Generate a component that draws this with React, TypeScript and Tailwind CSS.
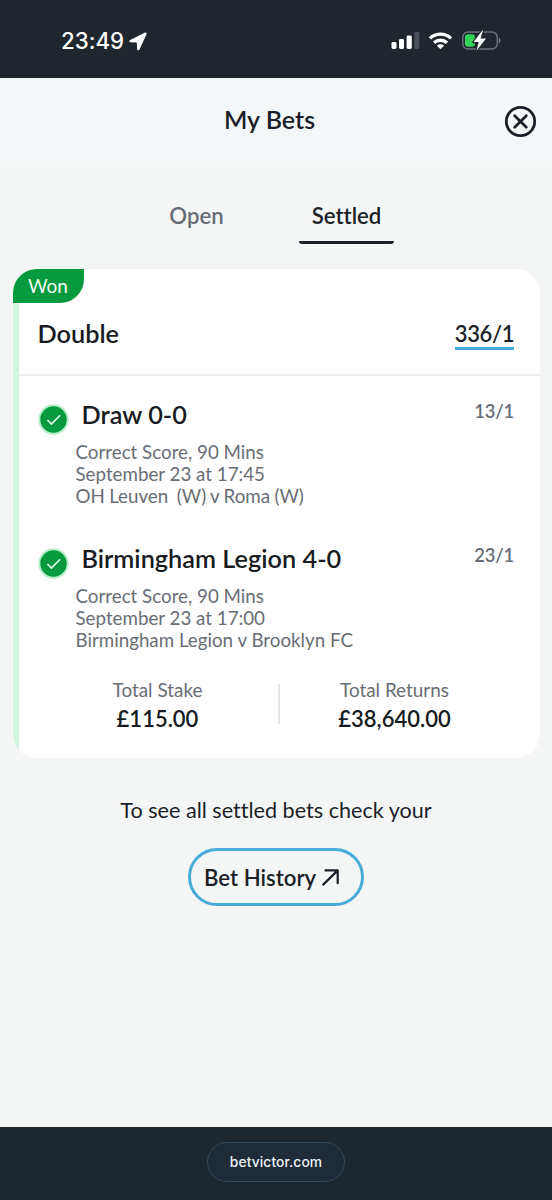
type Selection = {
  name: string;
  odds: string;
  details: string[];
};

const selections: Selection[] = [
  {
    name: "Draw 0-0",
    odds: "13/1",
    details: ["Correct Score, 90 Mins", "September 23 at 17:45", "OH Leuven\u00a0 (W) v Roma (W)"],
  },
  {
    name: "Birmingham Legion 4-0",
    odds: "23/1",
    details: ["Correct Score, 90 Mins", "September 23 at 17:00", "Birmingham Legion v Brooklyn FC"],
  },
];

function StatusBar() {
  return (
    <div className="flex h-[78px] items-start justify-between bg-[#1f262e] pt-[26px] pl-[61px] pr-[51px] font-['Inter',sans-serif] text-white">
      <div className="flex h-[30px] items-center gap-[5px]">
        <span className="text-[22.3px] leading-[30px] font-medium">23:49</span>
        <svg width="18" height="19" viewBox="0 0 18 19" fill="currentColor">
          <path d="M15.6.7 1.1 8C-.1 8.8.2 10.1 1.5 10.2l6.3.2.3 6.6c.1 1.6 1.7 1.8 2.4.4L17.4 2.6c.7-1.4-.5-2.5-1.8-1.9Z" />
        </svg>
      </div>
      <div className="flex h-[30px] items-center">
        <svg width="110" height="22" viewBox="391 30 110 22">
          <g fill="#fff">
            <rect x="391.5" y="42" width="5" height="7" rx="1.4" />
            <rect x="399" y="39" width="5" height="10" rx="1.4" />
            <rect x="406.6" y="35.5" width="5.2" height="13.5" rx="1.4" />
            <rect x="414.3" y="32" width="5" height="17" rx="1.4" fill="#4b525b" />
          </g>
          <g fill="none" stroke="#fff" strokeWidth="3.3">
            <path d="M430 38.4a15.2 15.2 0 0 1 21 0" />
            <path d="M434 42.8a9.6 9.6 0 0 1 13 0" />
          </g>
          <path d="M436.9 45.7a5.3 5.3 0 0 1 7.2 0l-3.6 3.6Z" fill="#fff" />
          <rect x="462.8" y="32" width="34.4" height="17" rx="5" fill="none" stroke="#6d747b" strokeWidth="1.4" />
          <path d="M498.7 37.7c2.6.8 2.6 5 0 5.8Z" fill="#6d747b" />
          <rect x="465" y="34.2" width="10" height="12.6" rx="3" fill="#31d15a" />
          <path d="m482.3 30.6-8.8 11.5h5.2l-2.2 8.3 9.6-12h-5.6l2.5-7.8Z" fill="#fff" stroke="#1f262e" strokeWidth="2.4" paintOrder="stroke" strokeLinejoin="round" />
        </svg>
      </div>
    </div>
  );
}

function WonCheck() {
  return (
    <svg className="mt-[5px] -ml-px shrink-0" width="31" height="31" viewBox="0 0 31 31">
      <circle cx="15.5" cy="15.5" r="15.2" fill="#b8ebca" />
      <circle cx="15.5" cy="15.5" r="13.2" fill="#059a3e" />
      <path d="m9.4 16 4.1 4 8.6-8.7" fill="none" stroke="#e9fbef" strokeWidth="1.6" />
    </svg>
  );
}

function SelectionRow({ name, odds, details }: Selection) {
  return (
    <div className="flex h-[144px] items-start pr-[26px] pl-[26px] first:[&_p:last-child]:[word-spacing:-0.5px]">
      <WonCheck />
      <div className="flex-1 pl-[7px]">
        <h3 className="pl-[6px] text-[25.3px] leading-[31px] font-semibold text-[#171b22]">{name}</h3>
        <div className="mt-[11px] text-[18.75px] leading-[22px] text-[#686d75]">
          {details.map((line) => (
            <p key={line} className="whitespace-nowrap">{line}</p>
          ))}
        </div>
      </div>
      <span className="text-[18.4px] leading-[24px] font-semibold tracking-[-0.2px] text-[#686d75]">{odds}</span>
    </div>
  );
}

function Total({ label, value }: { label: string; value: string }) {
  return (
    <div className="text-center">
      <p className="text-[18.9px] leading-[24px] text-[#686d75]">{label}</p>
      <p className="mt-[3px] text-[22px] leading-[28px] font-semibold text-[#171b22]">{value}</p>
    </div>
  );
}

export default function App() {
  return (
    <div className="flex h-[1200px] w-[552px] flex-col overflow-hidden bg-[#f4f6f6] font-['Lato',sans-serif] text-[#1b1f28] [font-variant-ligatures:none]">
      <StatusBar />
      <header className="grid h-[86px] grid-cols-[48px_1fr_48px] items-center bg-[#f3f7f8] pr-[15px]">
        <h1 className="col-start-2 -mt-[4px] pl-[2px] text-center text-[25px] leading-[30px] font-semibold">My Bets</h1>
        <button aria-label="Close" className="justify-self-end">
          <svg width="33" height="33" viewBox="0 0 33 33" fill="none" stroke="#1b1f28" strokeWidth="2.8" strokeLinecap="round">
            <circle cx="16.5" cy="16.5" r="14.2" />
            <path d="m10.7 10.7 11.6 11.6m0-11.6L10.7 22.3" />
          </svg>
        </button>
      </header>

      <nav className="flex h-[104.5px] pt-[37px] pl-[149px] text-[22.2px] leading-[30px] font-semibold">
        <div className="w-[95px] text-center text-[#686d75]">Open</div>
        <div className="ml-[55px] h-[43px] w-[95px] rounded-b-[3px] border-b-[3px] border-[#1b1f28] text-center">Settled</div>
      </nav>

      <section className="mr-[12px] ml-[12.5px] h-[489px] shrink-0 overflow-hidden rounded-[24px] bg-[linear-gradient(to_right,#d5f3e1_6.5px,#ffffff_6.5px)]">
        <div className="relative ml-[6.5px] flex h-[107px] items-end justify-between border-b-2 border-[#eceeef] pr-[26px] pb-[23.5px] pl-[18.5px]">
          <span className="absolute top-0 -left-[6.5px] h-[34.5px] w-[71.5px] rounded-br-[24px] bg-[#059a3e] pl-[15.5px] text-[19px] leading-[34px] text-[#effcf3]">Won</span>
          <h2 className="text-[25.3px] leading-[34px] font-semibold text-[#171b22]">Double</h2>
          <span className="border-b-3 border-[#46abd9] text-[22px] leading-[27px] font-semibold tracking-[-0.4px]">336/1</span>
        </div>
        <div className="pt-[23.5px]">
          {selections.map((selection) => (
            <SelectionRow key={selection.name} {...selection} />
          ))}
        </div>
        <div className="-mt-[9px] grid grid-cols-[240px_2px_230px] pl-[25px]">
          <Total label="Total Stake" value="£115.00" />
          <div className="mt-[6px] h-[40px] bg-[#e4e6e8]" />
          <Total label="Total Returns" value="£38,640.00" />
        </div>
      </section>

      <p className="mt-[37px] text-center text-[21.6px] leading-[30px]">To see all settled bets check your</p>
      <button className="mt-[23.5px] flex h-[58px] w-[176px] items-center self-center rounded-full border-3 border-[#46abd9] pl-[13px] text-[22.2px] leading-[30px] font-semibold">
        <span className="mt-px">Bet History</span>
        <svg className="ml-[6px]" width="18" height="18" viewBox="0 0 18 18" fill="none" stroke="currentColor" strokeWidth="2.2">
          <path d="M3.5 2.4h12.2v12.8M15.5 2.6 1.2 16.6" strokeLinejoin="round" strokeLinecap="round" />
        </svg>
      </button>

      <footer className="mt-auto flex h-[73px] shrink-0 items-start justify-center bg-[#1e262e] pt-[15px]">
        <div className="h-[40px] w-[138px] rounded-full border border-[#34495b] bg-[#1f2b37] text-center font-['Inter',sans-serif] text-[13.8px] leading-[38px] font-medium tracking-[0.1px] text-[#eef2f5]">betvictor.com</div>
      </footer>
    </div>
  );
}
